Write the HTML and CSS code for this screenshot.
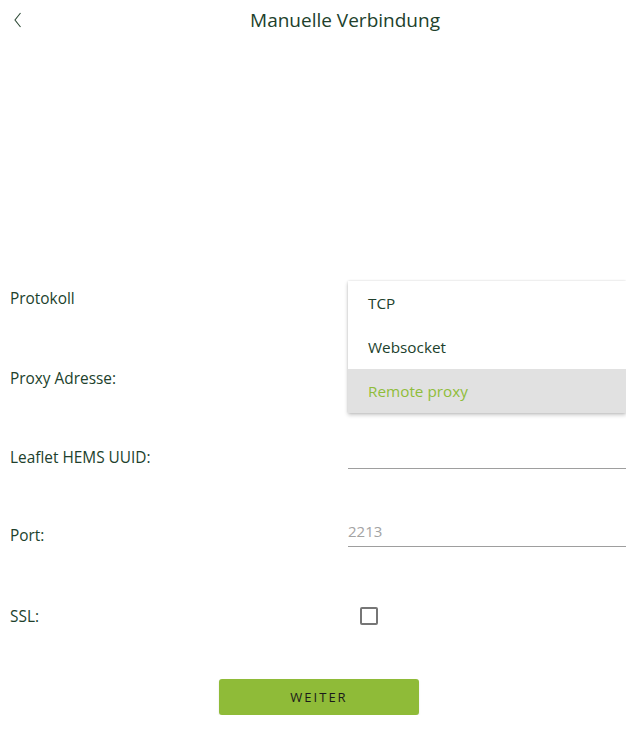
FILE: index.html
```html
<!DOCTYPE html>
<html lang="de">
<head>
<meta charset="utf-8">
<title>Manuelle Verbindung</title>
<link rel="stylesheet" href="styles.css">
</head>
<body>
<header class="topbar">
  <button class="back" type="button" aria-label="Zurück">
    <svg width="10" height="16" viewBox="0 0 10 16"><polyline points="7.5,1 2,8 7.5,15" fill="none" stroke="#2d4a36" stroke-width="1.1"/></svg>
  </button>
  <h1 class="title">Manuelle Verbindung</h1>
</header>
<main class="form">
  <div class="label">Protokoll</div>
  <div class="field field-select">
    <div class="select"></div>
    <ul class="menu">
      <li class="menu-item">TCP</li>
      <li class="menu-item">Websocket</li>
      <li class="menu-item is-selected">Remote proxy</li>
    </ul>
  </div>

  <div class="label">Proxy Adresse:</div>
  <input class="input" type="text">

  <div class="label">Leaflet HEMS UUID:</div>
  <input class="input" type="text">

  <div class="label">Port:</div>
  <input class="input" type="text" placeholder="2213">

  <div class="label">SSL:</div>
  <div class="field"><input class="checkbox" type="checkbox"></div>
</main>
<div class="actions">
  <button class="btn" type="button">WEITER</button>
</div>
</body>
</html>
```
FILE: styles.css
```css
* { box-sizing: border-box; }
html, body { margin: 0; padding: 0; background: #fff; }
body {
  font-family: "Open Sans", "Noto Sans", sans-serif;
  color: #213f2c;
  width: 626px;
  overflow: hidden;
}
.topbar {
  display: flex;
  align-items: center;
  height: 40px;
}
.back {
  width: 64px;
  height: 40px;
  padding: 0 0 0 13px;
  border: 0;
  background: none;
  display: flex;
  align-items: center;
}
.title {
  flex: 1;
  margin: 0;
  text-align: center;
  font-size: 19px;
  font-weight: 400;
  color: #213f2c;
}
.form {
  margin-top: 218px;
  display: grid;
  grid-template-columns: 348px 1fr;
  grid-template-rows: 80px 80px 78px 78px 84px;
  align-items: center;
}
.label {
  padding-left: 10px;
  font-size: 15.4px;
}
.field { position: relative; height: 100%; display: flex; align-items: center; }
.field-select { z-index: 2; }
.select {
  width: 100%;
  height: 32px;
  border-bottom: 1px solid #9e9e9e;
}
.menu {
  position: absolute;
  top: 23px;
  left: 0;
  right: 0;
  margin: 0;
  padding: 0;
  list-style: none;
  background: #fff;
  box-shadow: 0 2px 4px rgba(0,0,0,0.22), 0 0 2px rgba(0,0,0,0.12);
}
.menu-item {
  height: 44px;
  line-height: 44px;
  padding-left: 20px;
  font-size: 15.3px;
  color: #213f2c;
}
.menu-item.is-selected {
  background: #e1e1e1;
  color: #8fbd3a;
}
.input {
  width: 100%;
  height: 32px;
  margin: 0 0 8px 0;
  padding: 0;
  border: 0;
  border-bottom: 1px solid #9e9e9e;
  font-family: inherit;
  font-size: 15px;
  color: #213f2c;
  background: transparent;
  outline: none;
}
.input::placeholder { color: #a3a3a3; }
.checkbox {
  appearance: none;
  -webkit-appearance: none;
  width: 18px;
  height: 18px;
  margin: 0 0 0 12px;
  border: 2px solid #767676;
  border-radius: 2px;
  background: #fff;
}
.actions {
  display: flex;
  justify-content: center;
  padding-left: 12px;
  margin-top: 21px;
}
.btn {
  width: 200px;
  height: 36px;
  border: 0;
  border-radius: 3px;
  background: #8fbb38;
  color: #1a1a1a;
  font-family: inherit;
  font-size: 13px;
  font-weight: 500;
  letter-spacing: 2px;
  box-shadow: 0 1px 2px rgba(0,0,0,0.12);
}
```
